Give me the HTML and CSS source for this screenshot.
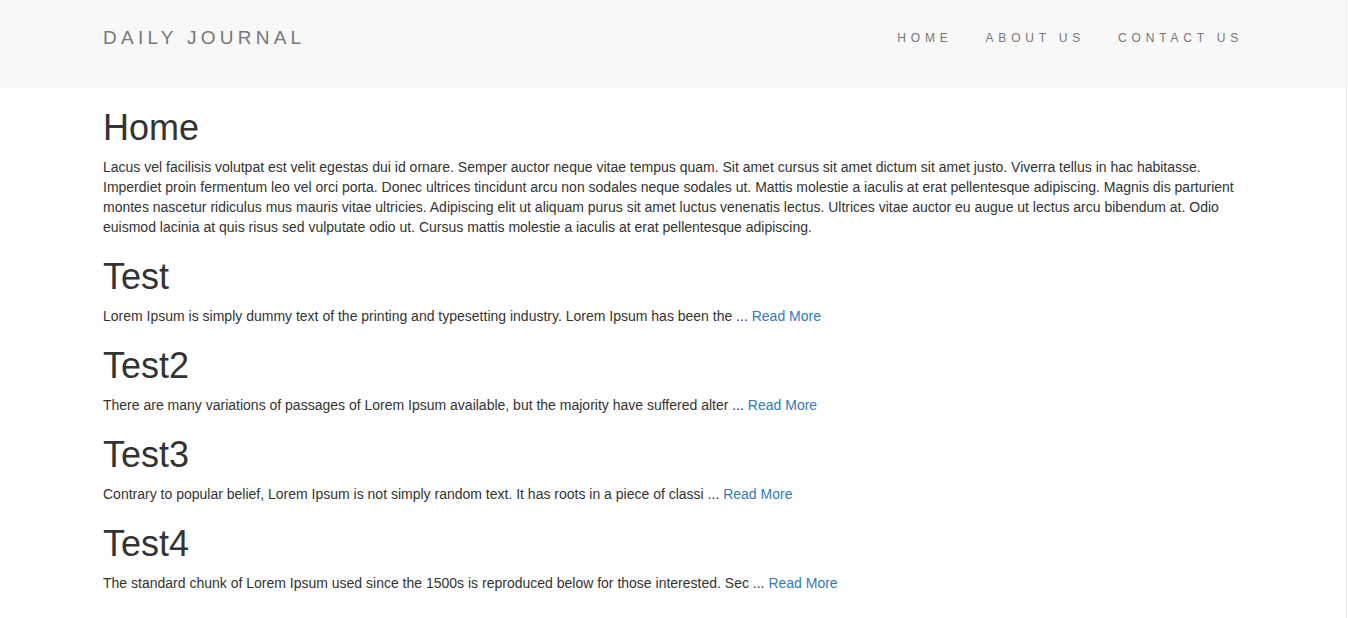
FILE: index.html
```html
<!DOCTYPE html>
<html lang="en">
<head>
<meta charset="utf-8">
<title>Daily Journal</title>
<link rel="stylesheet" href="styles.css">
</head>
<body>
<div class="page">
  <header class="navbar">
    <div class="container nav-inner">
      <a class="brand" href="#">DAILY JOURNAL</a>
      <nav class="nav-links">
        <a href="#">HOME</a>
        <a href="#">ABOUT US</a>
        <a href="#">CONTACT US</a>
      </nav>
    </div>
  </header>
  <main class="container">
    <h1>Home</h1>
    <p>Lacus vel facilisis volutpat est velit egestas dui id ornare. Semper auctor neque vitae tempus quam. Sit amet cursus sit amet dictum sit amet justo. Viverra tellus in hac habitasse. Imperdiet proin fermentum leo vel orci porta. Donec ultrices tincidunt arcu non sodales neque sodales ut. Mattis molestie a iaculis at erat pellentesque adipiscing. Magnis dis parturient montes nascetur ridiculus mus mauris vitae ultricies. Adipiscing elit ut aliquam purus sit amet luctus venenatis lectus. Ultrices vitae auctor eu augue ut lectus arcu bibendum at. Odio euismod lacinia at quis risus sed vulputate odio ut. Cursus mattis molestie a iaculis at erat pellentesque adipiscing.</p>

    <h1>Test</h1>
    <p>Lorem Ipsum is simply dummy text of the printing and typesetting industry. Lorem Ipsum has been the ... <a href="#">Read More</a></p>

    <h1>Test2</h1>
    <p>There are many variations of passages of Lorem Ipsum available, but the majority have suffered alter ... <a href="#">Read More</a></p>

    <h1>Test3</h1>
    <p>Contrary to popular belief, Lorem Ipsum is not simply random text. It has roots in a piece of classi ... <a href="#">Read More</a></p>

    <h1>Test4</h1>
    <p>The standard chunk of Lorem Ipsum used since the 1500s is reproduced below for those interested. Sec ... <a href="#">Read More</a></p>
  </main>
</div>
</body>
</html>
```

FILE: styles.css
```css
html, body {
  margin: 0;
  padding: 0;
  background: #fff;
}
body {
  font-family: "Liberation Sans", Arial, Helvetica, sans-serif;
  font-size: 14px;
  line-height: 20px;
  color: #333;
}
.page {
  width: 1346px;
  min-height: 618px;
  border-right: 1px solid #ebebeb;
  box-sizing: content-box;
}
.container {
  width: 1140px;
  margin: 0 auto;
}
.navbar {
  background: #f8f8f8;
  height: 88px;
}
.nav-inner {
  display: flex;
  align-items: center;
  justify-content: space-between;
  height: 88px;
}
.brand {
  font-size: 19px;
  letter-spacing: 4.25px;
  color: #777;
  text-decoration: none;
  line-height: 20px;
  margin-top: -13px;
}
.nav-links {
  display: flex;
  align-items: center;
  margin-top: -13px;
  margin-right: 0;
}
.nav-links a {
  font-size: 12px;
  letter-spacing: 4.8px;
  color: #777;
  text-decoration: none;
  padding-left: 33px;
}
.nav-links a:first-child {
  padding-left: 0;
}
h1 {
  font-size: 36px;
  font-weight: 500;
  line-height: 39px;
  margin: 20px 0 10px;
  color: #333;
}
p {
  margin: 0 0 10px;
}
a {
  color: #337ab7;
  text-decoration: none;
}
```
